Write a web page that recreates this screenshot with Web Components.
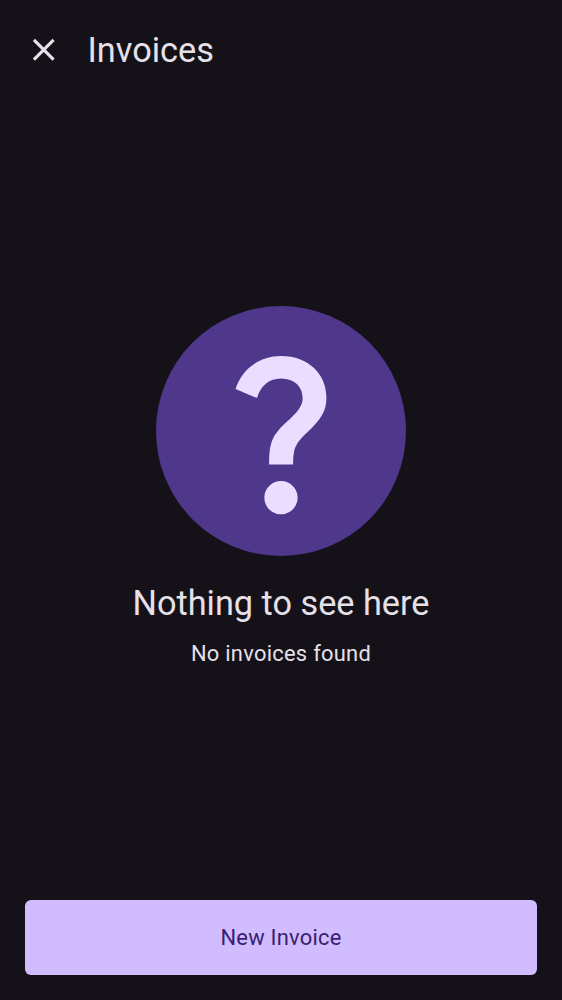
<!DOCTYPE html>
<html lang="en"><head><meta charset="utf-8"><title>Invoices</title>
<style>html,body{margin:0;height:100%;background:#141218}</style></head><body>
<invoice-screen></invoice-screen>
<script>
const define=(name,html)=>customElements.define(name,class extends HTMLElement{
 constructor(){super();this.attachShadow({mode:'open'}).innerHTML=html;}
});
define('top-bar',`<style>
:host{display:flex;align-items:center;height:100px;padding-left:25px;box-sizing:border-box;gap:25px}
svg{display:block;width:37.5px;height:37.5px;fill:#e6e0e9}
h1{margin:0;font-size:34.3px;font-weight:400;line-height:44px}
</style><svg viewBox="0 0 24 24"><path d="M19 6.41 17.59 5 12 10.59 6.41 5 5 6.41 10.59 12 5 17.59 6.41 19 12 13.41 17.59 19 19 17.59 13.41 12z"/></svg><h1><slot></slot></h1>`);
define('empty-state',`<style>
:host{display:flex;flex-direction:column;align-items:center;padding-top:206px}
.disc{width:250px;height:250px;border-radius:50%;background:#4f378b;display:grid;place-items:center}
svg{display:block;width:200px;height:200px;fill:#eaddff}
h2{margin:25px 0 0;font-size:34.25px;font-weight:400;line-height:44px}
p{margin:12px 0 0;font-size:21.9px;line-height:33px;letter-spacing:.27px}
</style><div class="disc"><svg viewBox="0 -960 960 960"><path d="M423-319C423-374 426-405 438-436C451-466 472-491 500-517C527-542 548-561 562-580C577-600 584-617 584-637C584-692 545-732 480-732C416-732 381-691 365-638L262-682C290-770 370-840 480-840C613-840 698-752 698-641C698-608 692-582 677-557C660-527 637-504 609-476C576-445 562-429 550-404C541-384 539-361 538-319ZM480-80C436-80 400-116 400-160C400-204 436-240 480-240C524-240 560-204 560-160C560-116 524-80 480-80Z"/></svg></div>
<h2><slot name="title"></slot></h2><p><slot></slot></p>`);
define('primary-button',`<style>
:host{display:block;margin:auto 25px 25px}
button{display:block;width:100%;height:75px;padding:0;border:0;border-radius:6px;background:#d0bcff;color:#381e72;font:inherit;font-size:21.9px;letter-spacing:.23px}
</style><button><slot></slot></button>`);
define('invoice-screen',`<style>
:host{display:flex;flex-direction:column;height:1000px;background:#141218;color:#e6e0e9;font-family:Roboto,sans-serif}
</style><top-bar>Invoices</top-bar><empty-state><span slot="title">Nothing to see here</span>No invoices found</empty-state><primary-button>New Invoice</primary-button>`);
</script></body></html>
